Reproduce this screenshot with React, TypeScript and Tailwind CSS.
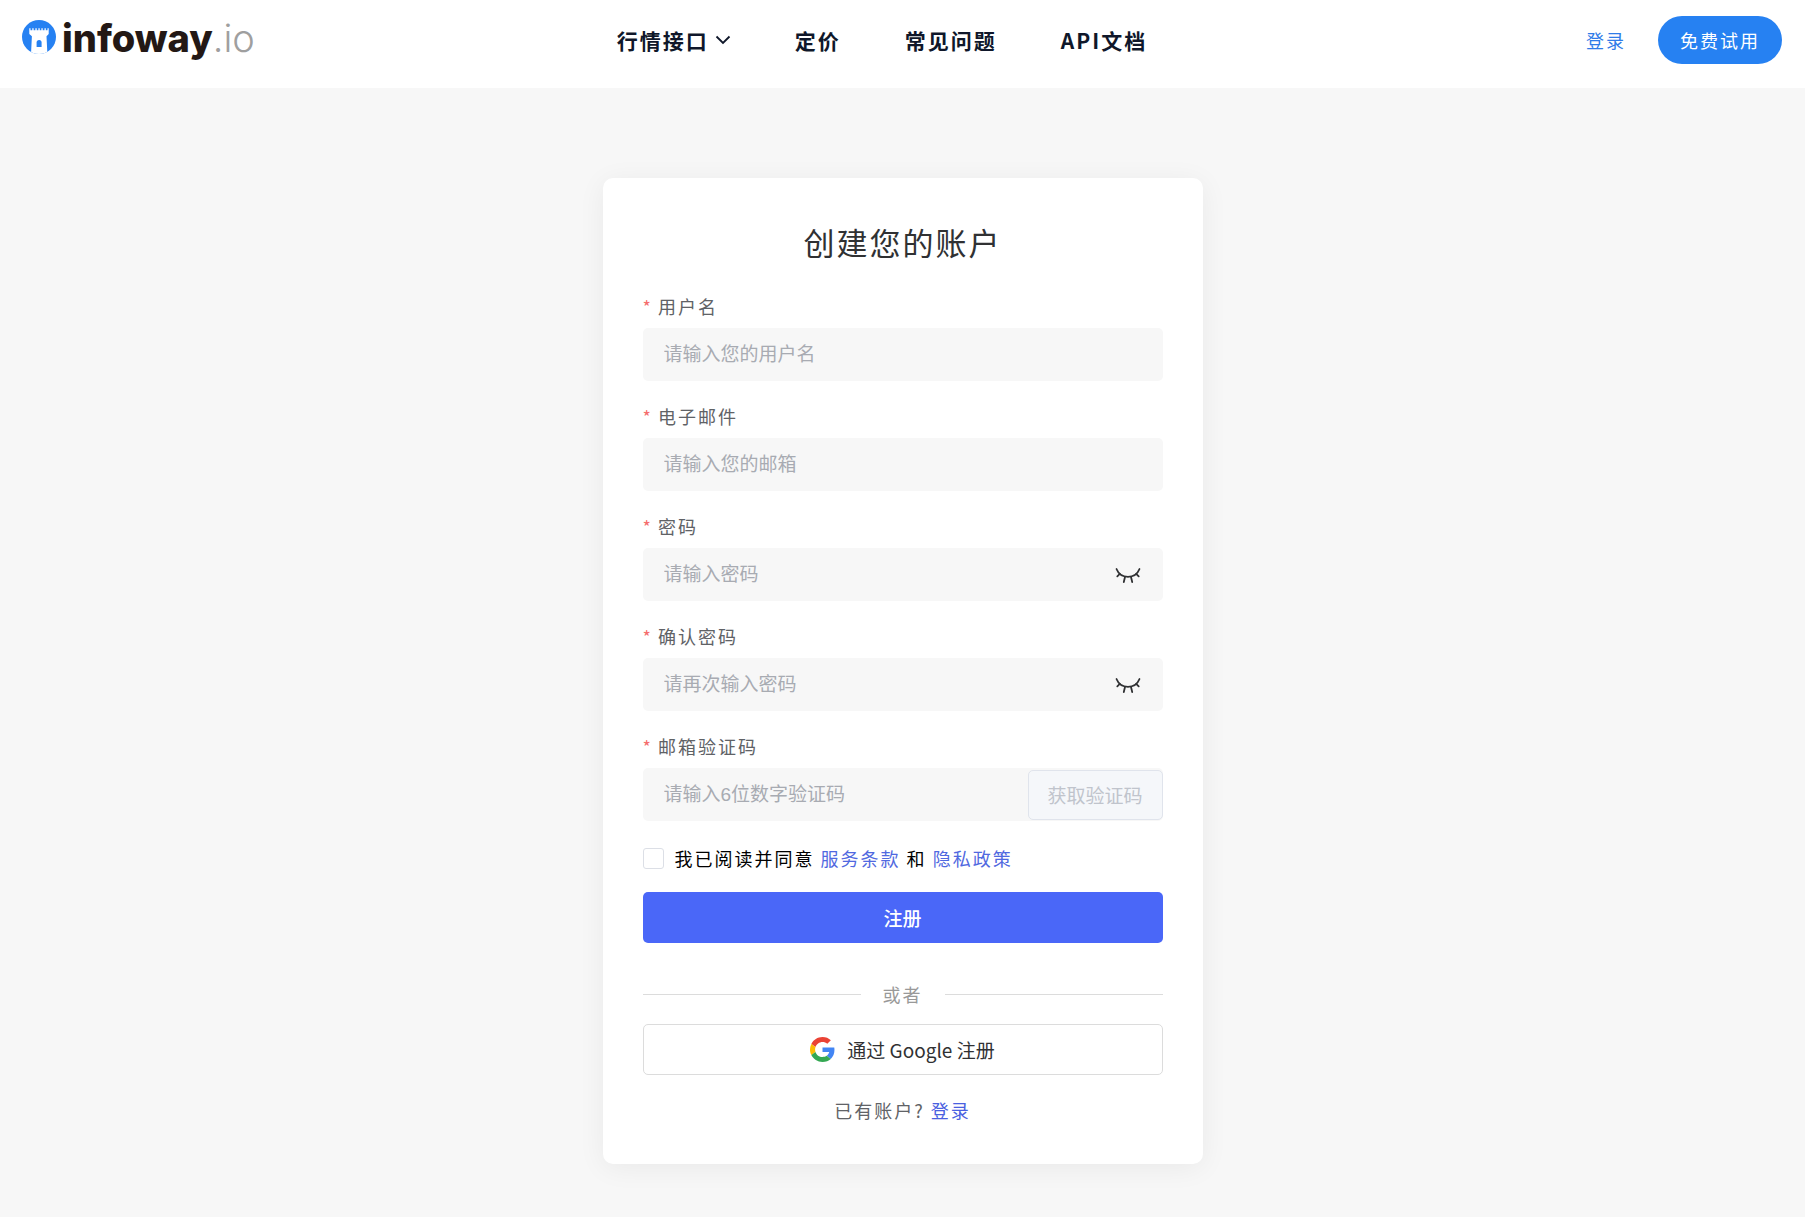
import React, { useState } from "react";
import clsx from "clsx";

const NAV_LINKS = ["定价", "常见问题", "API文档"];

const FIELDS = [
	{ id: "username", label: "用户名", placeholder: "请输入您的用户名", type: "text" },
	{ id: "email", label: "电子邮件", placeholder: "请输入您的邮箱", type: "email" },
	{ id: "password", label: "密码", placeholder: "请输入密码", type: "password" },
	{ id: "confirm", label: "确认密码", placeholder: "请再次输入密码", type: "password" },
	{ id: "code", label: "邮箱验证码", placeholder: "请输入6位数字验证码", type: "text" },
];

function Logo() {
	return (
		<a href="#" className="flex items-center gap-[6px] pb-1" aria-label="infoway.io">
			<svg width="34" height="34" viewBox="0 0 34 34" className="mb-[2px]">
				<defs>
					<clipPath id="badge">
						<circle cx="17" cy="17" r="17" />
					</clipPath>
				</defs>
				<g clipPath="url(#badge)">
					<rect width="34" height="34" fill="#2681f2" />
					<path
						fill="#fff"
						d="M7.300 8.300h1.200v2h1.800v-2h1.300v2h1.800v-2h1.300v2h1.700v-2h1.300v2h1.700v-2h1.300v2h1.800v-2h1.300v2h1.700v-2h1.200V14l-2.200 2.300.9 17.700H9l.9-17.700L7.300 14z"
					/>
					<path fill="#2681f2" d="M14.600 27v-4.500a2.500 2.500 0 0 1 5 0V27z" />
				</g>
			</svg>
			<span className="font-['Inter',sans-serif] text-[38px] leading-10 font-extrabold tracking-normal text-[#231815]">
				infoway<span className="font-light text-[#9f9f9f]">.io</span>
			</span>
		</a>
	);
}

function ClosedEye() {
	return (
		<svg
			width="26"
			height="18"
			viewBox="0 0 26 18"
			fill="none"
			stroke="currentColor"
			strokeWidth="1.8"
			strokeLinecap="round"
		>
			<path d="M1.500 3C3.500 8 8 10.800 13 10.800S22.500 8 24.500 3" />
			<path d="M4.800 7.800 2.300 10.300M21.200 7.800l2.500 2.500M10 11l-1.200 5M16 11l1.200 5" />
		</svg>
	);
}

function GoogleIcon() {
	return (
		<svg width="25" height="25" viewBox="0 0 48 48">
			<path fill="#EA4335" d="M24 9.500c3.540 0 6.710 1.220 9.210 3.600l6.850-6.850C35.900 2.380 30.470 0 24 0 14.620 0 6.510 5.380 2.560 13.220l7.980 6.190C12.430 13.720 17.740 9.500 24 9.500z" />
			<path fill="#4285F4" d="M46.980 24.550c0-1.570-.15-3.090-.38-4.550H24v9.020h12.940c-.58 2.960-2.260 5.480-4.780 7.180l7.730 6c4.510-4.180 7.090-10.360 7.090-17.650z" />
			<path fill="#FBBC05" d="M10.530 28.590c-.48-1.450-.76-2.990-.76-4.590s.27-3.140.76-4.590l-7.980-6.190C.92 16.460 0 20.120 0 24c0 3.880.92 7.540 2.560 10.780l7.970-6.190z" />
			<path fill="#34A853" d="M24 48c6.480 0 11.930-2.130 15.890-5.810l-7.730-6c-2.150 1.450-4.920 2.300-8.160 2.300-6.260 0-11.570-4.220-13.470-9.910l-7.980 6.190C6.510 42.620 14.620 48 24 48z" />
		</svg>
	);
}

function Header() {
	return (
		<header className="flex h-[88px] items-start bg-white pt-4 pr-[23px] pl-[22px]">
			<div className="flex h-12 flex-1 items-center">
				<Logo />
			</div>
			<nav className="flex h-12 items-center gap-16 pr-10 text-[21px] font-bold text-[#0f172a]">
				<button type="button" className="flex items-center gap-[6px] tracking-[2px]">
					行情接口
					<svg width="16" height="10" viewBox="0 0 16 10" fill="none" stroke="currentColor" strokeWidth="1.800">
						<path d="m1.500 1.500 6.500 6.500 6.500-6.500" />
					</svg>
				</button>
				{NAV_LINKS.map((text) => (
					<a key={text} href="#">
						{text}
					</a>
				))}
			</nav>
			<div className="flex h-12 flex-1 items-center justify-end gap-8">
				<a href="#" className="text-[#2f7be8]">
					登录
				</a>
				<button type="button" className="h-12 rounded-full bg-[#2681f2] px-[22px] tracking-[2px] text-white">
					免费试用
				</button>
			</div>
		</header>
	);
}

export default function App() {
	const [values, setValues] = useState<Record<string, string>>({});
	const [visible, setVisible] = useState<Record<string, boolean>>({});
	const [agreed, setAgreed] = useState(false);

	return (
		<div className="min-h-screen bg-[#f7f7f7] font-['Noto_Sans_CJK_SC',sans-serif] text-[18px] leading-7 tracking-[2px]">
			<Header />
			<main className="flex justify-center px-4 pt-[90px] pb-12">
				<form
					className="w-full max-w-[600px] rounded-[10px] bg-white px-10 pt-[42px] pb-10 shadow-[0_4px_28px_rgba(0,0,0,0.06)]"
					onSubmit={(e) => e.preventDefault()}
				>
					<h1 className="mb-7 text-center text-[31px] leading-11 text-[#303133]">创建您的账户</h1>

					<div className="flex flex-col gap-[21px]">
						{FIELDS.map((f) => (
							<div key={f.id}>
								<label htmlFor={f.id} className="mb-2 flex gap-[5px] text-[#606266]">
									<span className="text-[#f56c6c]">*</span>
									{f.label}
								</label>
								<div className="flex h-[53px] items-center rounded-[5px] bg-[#f7f7f7]">
									<input
										id={f.id}
										type={visible[f.id] ? "text" : f.type}
										placeholder={f.placeholder}
										value={values[f.id] || ""}
										onChange={(e) => setValues({ ...values, [f.id]: e.target.value })}
										className="h-full min-w-0 flex-1 bg-transparent pl-[21px] font-['Liberation_Sans','Noto_Sans_CJK_SC',sans-serif] text-[19px] tracking-normal text-[#606266] outline-none placeholder:text-[#a8abb2]"
									/>
									{f.type === "password" && (
										<button
											type="button"
											aria-label="显示密码"
											className="mr-[22px] text-[#303133]"
											onClick={() => setVisible({ ...visible, [f.id]: !visible[f.id] })}
										>
											<ClosedEye />
										</button>
									)}
									{f.id === "code" && (
										<button
											type="button"
											disabled
											className="h-[50px] w-[135px] rounded-[5px] border border-[#e0e4ec] bg-[#f5f7fa] text-[19px] tracking-normal text-[#c0c4cc]"
										>
											获取验证码
										</button>
									)}
								</div>
							</div>
						))}
					</div>

					<div className="mt-[23px] flex items-center gap-[11px] text-black">
						<input
							id="agree"
							type="checkbox"
							checked={agreed}
							onChange={(e) => setAgreed(e.target.checked)}
							className={clsx(
								"size-[21px] shrink-0 appearance-none rounded-[3px] border border-[#dcdfe6]",
								agreed ? "bg-[#4a67f8]" : "bg-white"
							)}
						/>
						<label htmlFor="agree">
							我已阅读并同意{" "}
							<a href="#" className="text-[#5068e0]">
								服务条款
							</a>{" "}
							和{" "}
							<a href="#" className="text-[#5068e0]">
								隐私政策
							</a>
						</label>
					</div>

					<button
						type="submit"
						className="mt-5 h-[51px] w-full rounded-[5px] bg-[#4a67f8] text-[19px] font-medium tracking-normal text-white"
					>
						注册
					</button>

					<div className="mt-[37px] mb-4 flex items-center gap-[22px] text-[#999]">
						<span className="h-px flex-1 bg-[#dcdcdc]" />
						或者
						<span className="h-px flex-1 bg-[#dcdcdc]" />
					</div>

					<button
						type="button"
						className="flex h-[51px] w-full items-center justify-center gap-3 rounded-[5px] border border-[#dcdcdc] bg-white text-[19px] tracking-normal text-[#303133]"
					>
						<GoogleIcon />
						通过 Google 注册
					</button>

					<p className="mt-[21px] text-center text-[#606266]">
						已有账户?{" "}
						<a href="#" className="text-[#4a60e0]">
							登录
						</a>
					</p>
				</form>
			</main>
		</div>
	);
}
